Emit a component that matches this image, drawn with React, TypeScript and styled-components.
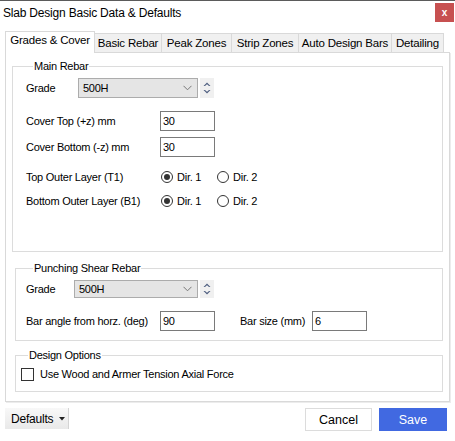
import React, { useState } from "react";
import styled, { createGlobalStyle } from "styled-components";

const GlobalStyle = createGlobalStyle`
  html, body {
    margin: 0;
    padding: 0;
    background: #fff;
  }
  body {
    font-family: "Liberation Sans", Arial, sans-serif;
    font-size: 11px;
    letter-spacing: -0.25px;
    color: #000;
  }
  * {
    box-sizing: border-box;
  }
`;

const Window = styled.div`
  width: 455px;
  height: 441px;
  border-top: 1px solid #5b5b5b;
  background: #fff;
  display: flex;
  flex-direction: column;
`;

const TitleBar = styled.div`
  height: 30px;
  display: flex;
  align-items: flex-start;
  justify-content: space-between;
`;

const Title = styled.div`
  margin: 5px 0 0 3px;
  font-size: 12px;
  letter-spacing: -0.2px;
  line-height: 14px;
`;

const CloseButton = styled.button`
  margin: 2px 1px 0 0;
  width: 19px;
  height: 19px;
  border: none;
  padding: 0;
  background: #c75050;
  color: #fff;
  font-family: "Liberation Sans", Arial, sans-serif;
  font-weight: bold;
  font-size: 10px;
  line-height: 19px;
`;

const TabStrip = styled.div`
  height: 21px;
  margin-left: 5px;
  display: flex;
  align-items: flex-end;
`;

const Tab = styled.div<{ $active?: boolean; $w: number }>`
  width: ${(p) => p.$w}px;
  height: ${(p) => (p.$active ? 22 : 19)}px;
  margin-bottom: ${(p) => (p.$active ? -1 : 0)}px;
  position: relative;
  z-index: ${(p) => (p.$active ? 1 : 0)};
  background: ${(p) => (p.$active ? "#fff" : "#f0f0f0")};
  border: 1px solid #d9d9d9;
  border-bottom: none;
  border-left: ${(p) => (p.$active ? "1px solid #d9d9d9" : "none")};
  font-size: 11.5px;
  letter-spacing: -0.2px;
  line-height: ${(p) => (p.$active ? 17 : 18)}px;
  text-align: center;
  white-space: nowrap;
`;

const Panel = styled.div`
  margin: 0 5px;
  height: 350px;
  border: 1px solid #d9d9d9;
  box-shadow: 1px 1px 0 #ececec;
  display: flex;
  flex-direction: column;
`;

const Group = styled.fieldset<{ $h: number; $mt: number; $ml: number; $pl: number }>`
  margin: ${(p) => p.$mt}px 6px 0 ${(p) => p.$ml}px;
  height: ${(p) => p.$h}px;
  padding: 5px 0 0 ${(p) => p.$pl}px;
  border: 1px solid #dcdcdc;
  min-width: 0;
  display: flex;
  flex-direction: column;
`;

const Legend = styled.legend`
  margin-left: 7px;
  padding: 0 1px;
  font-size: 11px;
  line-height: 13px;
`;

const Row = styled.div<{ $mt?: number; $h?: number }>`
  display: flex;
  align-items: center;
  height: ${(p) => p.$h ?? 20}px;
  margin-top: ${(p) => p.$mt ?? 0}px;
`;

const Label = styled.span<{ $w: number; $pl?: number }>`
  width: ${(p) => p.$w}px;
  padding-left: ${(p) => p.$pl ?? 0}px;
  flex: none;
  white-space: nowrap;
`;

const SelectBox = styled.div<{ $w: number; $h: number }>`
  width: ${(p) => p.$w}px;
  height: ${(p) => p.$h}px;
  background: #e5e5e5;
  border: 1px solid #acacac;
  display: flex;
  align-items: center;
  justify-content: space-between;
  padding: 0 5px 0 4px;
`;

const Spinner = styled.div<{ $h: number }>`
  width: 14px;
  height: ${(p) => p.$h}px;
  margin-left: 2px;
  background: #f0f0f0;
  display: flex;
  align-items: center;
  justify-content: center;
`;

const TextBox = styled.input`
  width: 55px;
  height: 20px;
  border: 1px solid #7a7a7a;
  padding: 0 2px;
  font-family: "Liberation Sans", Arial, sans-serif;
  font-size: 11px;
  letter-spacing: -0.25px;
  color: #000;
  outline: none;
`;

const RadioOption = styled.label<{ $w: number }>`
  width: ${(p) => p.$w}px;
  display: flex;
  align-items: center;
  gap: 4px;
`;

const RadioCircle = styled.span<{ $on: boolean }>`
  width: 12px;
  height: 12px;
  border-radius: 50%;
  border: 1px solid #333;
  background: #fff;
  display: flex;
  align-items: center;
  justify-content: center;
  &::after {
    content: "";
    width: 6px;
    height: 6px;
    border-radius: 50%;
    background: ${(p) => (p.$on ? "#333" : "transparent")};
  }
`;

const CheckBox = styled.span`
  width: 13px;
  height: 13px;
  border: 1px solid #333;
  background: #fff;
  margin-right: 6px;
  flex: none;
`;

const Footer = styled.div`
  margin-top: 6px;
  padding: 0 8px 0 5px;
  display: flex;
  align-items: flex-start;
  gap: 7px;
`;

const Spacer = styled.div`
  flex: 1;
`;

const DefaultsButton = styled.button`
  width: 63px;
  height: 21px;
  border: none;
  padding: 0 0 0 6px;
  background: linear-gradient(#f8f8f8, #e9e9e9);
  box-shadow: 1px 0 0 #d4d4d4;
  font-family: "Liberation Sans", Arial, sans-serif;
  font-size: 12px;
  letter-spacing: -0.2px;
  color: #000;
  display: flex;
  align-items: center;
  gap: 6px;
`;

const Button = styled.button<{ $primary?: boolean }>`
  width: ${(p) => (p.$primary ? 68 : 67)}px;
  height: 23px;
  border: 1px solid ${(p) => (p.$primary ? "#4169e1" : "#dcdcdc")};
  background: ${(p) => (p.$primary ? "#4169e1" : "#fff")};
  color: ${(p) => (p.$primary ? "#fff" : "#000")};
  font-family: "Liberation Sans", Arial, sans-serif;
  font-size: 12.5px;
  padding: 0;
`;

const tabs = [
  { name: "Grades & Cover", w: 90 },
  { name: "Basic Rebar", w: 67 },
  { name: "Peak Zones", w: 70 },
  { name: "Strip Zones", w: 67 },
  { name: "Auto Design Bars", w: 93 },
  { name: "Detailing", w: 52 },
];

function Chevron() {
  return (
    <svg width="9" height="6" viewBox="0 0 9 6">
      <polyline points="0.5,0.8 4.5,4.8 8.5,0.8" fill="none" stroke="#777" strokeWidth="1" />
    </svg>
  );
}

function Arrows() {
  return (
    <svg width="10" height="14" viewBox="0 0 10 14">
      <polygon points="1.5,5 5,1.5 8.5,5 7,5 5,3.2 3,5" fill="#4f5f80" />
      <polygon points="1.5,9 5,12.5 8.5,9 7,9 5,10.8 3,9" fill="#4f5f80" />
    </svg>
  );
}

function GradeSelect({ w, h }: { w: number; h: number }) {
  return (
    <>
      <SelectBox $w={w} $h={h}>
        <span>500H</span>
        <Chevron />
      </SelectBox>
      <Spinner $h={h}>
        <Arrows />
      </Spinner>
    </>
  );
}

function DirRadios({ value }: { value: number }) {
  return (
    <>
      <RadioOption $w={56}>
        <RadioCircle $on={value === 1} />
        Dir. 1
      </RadioOption>
      <RadioOption $w={60}>
        <RadioCircle $on={value === 2} />
        Dir. 2
      </RadioOption>
    </>
  );
}

export default function App() {
  const [coverTop, setCoverTop] = useState("30");
  const [coverBottom, setCoverBottom] = useState("30");
  const [angle, setAngle] = useState("90");
  const [barSize, setBarSize] = useState("6");

  return (
    <>
      <GlobalStyle />
      <Window>
        <TitleBar>
          <Title>Slab Design Basic Data &amp; Defaults</Title>
          <CloseButton>x</CloseButton>
        </TitleBar>
        <TabStrip>
          {tabs.map((t, i) => (
            <Tab key={t.name} $active={i === 0} $w={t.w}>
              {t.name}
            </Tab>
          ))}
        </TabStrip>
        <Panel>
          <Group $h={192} $mt={7} $ml={6} $pl={13}>
            <Legend>Main Rebar</Legend>
            <Row>
              <Label $w={52}>Grade</Label>
              <GradeSelect w={120} h={20} />
            </Row>
            <Row $mt={13}>
              <Label $w={134}>Cover Top (+z) mm</Label>
              <TextBox value={coverTop} onChange={(e) => setCoverTop(e.target.value)} />
            </Row>
            <Row $mt={6}>
              <Label $w={134}>Cover Bottom (-z) mm</Label>
              <TextBox value={coverBottom} onChange={(e) => setCoverBottom(e.target.value)} />
            </Row>
            <Row $mt={10}>
              <Label $w={135}>Top Outer Layer (T1)</Label>
              <DirRadios value={1} />
            </Row>
            <Row $mt={4}>
              <Label $w={135}>Bottom Outer Layer (B1)</Label>
              <DirRadios value={1} />
            </Row>
          </Group>

          <Group $h={79} $mt={10} $ml={9} $pl={10}>
            <Legend>Punching Shear Rebar</Legend>
            <Row $h={18}>
              <Label $w={48}>Grade</Label>
              <GradeSelect w={124} h={18} />
            </Row>
            <Row $mt={13}>
              <Label $w={134}>Bar angle from horz. (deg)</Label>
              <TextBox value={angle} onChange={(e) => setAngle(e.target.value)} />
              <Label $w={97} $pl={25}>
                Bar size (mm)
              </Label>
              <TextBox value={barSize} onChange={(e) => setBarSize(e.target.value)} />
            </Row>
          </Group>

          <Group $h={43} $mt={8} $ml={9} $pl={5}>
            <Legend>Design Options</Legend>
            <Row $mt={-3}>
              <CheckBox />
              Use Wood and Armer Tension Axial Force
            </Row>
          </Group>
        </Panel>
        <Footer>
          <DefaultsButton>
            Defaults
            <svg width="6" height="4" viewBox="0 0 6 4">
              <polygon points="0,0 6,0 3,3.5" fill="#222" />
            </svg>
          </DefaultsButton>
          <Spacer />
          <Button>Cancel</Button>
          <Button $primary>Save</Button>
        </Footer>
      </Window>
    </>
  );
}
